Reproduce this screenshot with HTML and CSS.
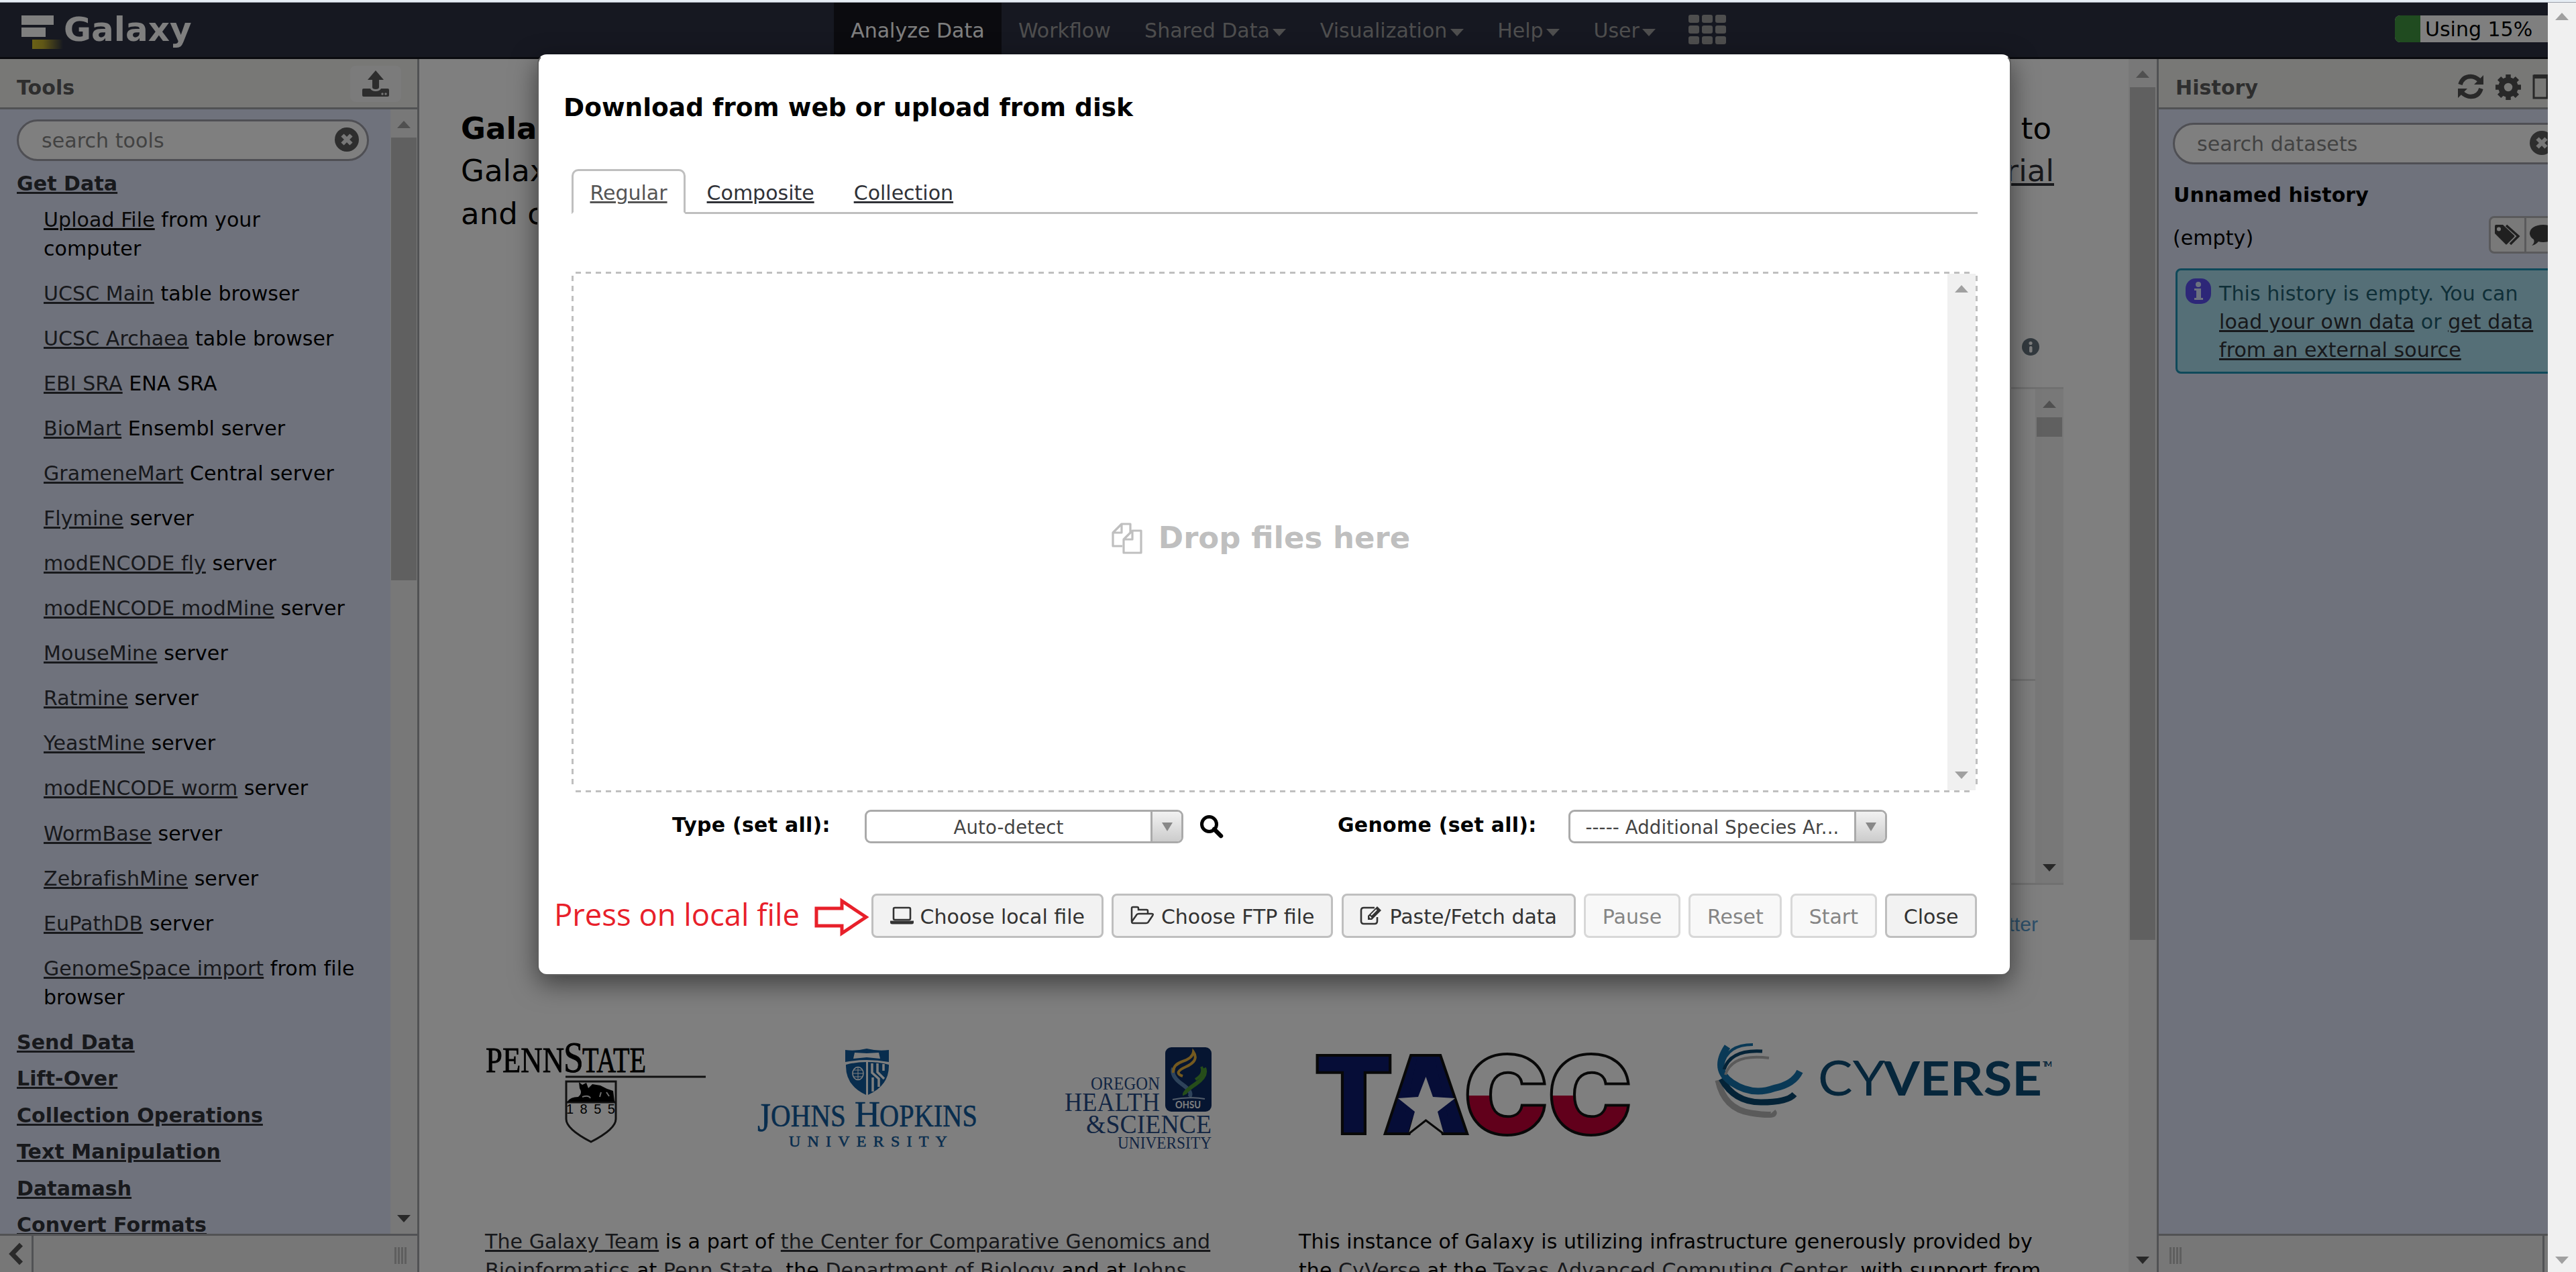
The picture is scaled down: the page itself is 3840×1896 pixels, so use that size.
FILE: index.html
```html
<!DOCTYPE html>
<html lang="en">
<head>
<meta charset="utf-8">
<title>Galaxy</title>
<link rel="stylesheet" href="styles.css">
</head>
<body>
<div class="topline"></div>
<div class="window">
<div class="app">
  <header class="masthead">
    <div class="brand">
      <svg class="brand-mark" width="66" height="54" viewBox="0 0 66 54">
        <defs><linearGradient id="gold" x1="0" x2="1"><stop offset="0" stop-color="#d6c32c"/><stop offset=".35" stop-color="#c0ae2c"/><stop offset="1" stop-color="#2c3143"/></linearGradient></defs>
        <rect x="2" y="2" width="48" height="14" fill="#fff"/><rect x="2" y="20" width="36" height="14" fill="#fff"/><rect x="18" y="38" width="46" height="14" fill="url(#gold)"/>
      </svg>
      <span class="brand-name">Galaxy</span>
    </div>
    <nav class="menu">
      <a class="active">Analyze Data</a>
      <a>Workflow</a>
      <a>Shared Data<i class="caret"></i></a>
      <a>Visualization<i class="caret"></i></a>
      <a>Help<i class="caret"></i></a>
      <a>User<i class="caret"></i></a>
      <div class="apps"><b></b><b></b><b></b><b></b><b></b><b></b><b></b><b></b><b></b></div>
    </nav>
    <div class="quota"><span class="quota-used"></span><span class="quota-text">Using 15%</span></div>
  </header>
  <div class="columns">
    <aside class="panel tools">
      <div class="panel-head"><h2>Tools</h2>
        <div class="upload"><svg width="42" height="40" viewBox="0 0 42 40"><path fill="#5a5a5a" d="M21 0 33 14H26V25Q26 28 21 28T16 25V14H9Z"/><path fill="#5a5a5a" d="M3 27H13Q15 31 21 31T29 27H39Q41 27 41 29V37Q41 39 39 39H3Q1 39 1 37V29Q1 27 3 27Z"/><circle cx="31" cy="35" r="1.7" fill="#eee"/><circle cx="36" cy="35" r="1.7" fill="#eee"/></svg></div>
      </div>
      <div class="panel-main">
        <div class="tool-list">
          <div class="search"><span>search tools</span><svg width="38" height="38" viewBox="0 0 38 38"><circle cx="19" cy="19" r="18" fill="#5c5c5c"/><path d="M12.500 12.500 25.500 25.500M25.500 12.500 12.500 25.500" stroke="#eee" stroke-width="6"/></svg></div>
          <h3><a>Get Data</a></h3>
          <p><a class="dark">Upload File</a> from your computer</p>
          <p><a>UCSC Main</a> table browser</p>
          <p><a>UCSC Archaea</a> table browser</p>
          <p><a>EBI SRA</a> ENA SRA</p>
          <p><a>BioMart</a> Ensembl server</p>
          <p><a>GrameneMart</a> Central server</p>
          <p><a>Flymine</a> server</p>
          <p><a>modENCODE fly</a> server</p>
          <p><a>modENCODE modMine</a> server</p>
          <p><a>MouseMine</a> server</p>
          <p><a>Ratmine</a> server</p>
          <p><a>YeastMine</a> server</p>
          <p><a>modENCODE worm</a> server</p>
          <p><a>WormBase</a> server</p>
          <p><a>ZebrafishMine</a> server</p>
          <p><a>EuPathDB</a> server</p>
          <p><a>GenomeSpace import</a> from file browser</p>
          <h3><a>Send Data</a></h3>
          <h3><a>Lift-Over</a></h3>
          <h3><a>Collection Operations</a></h3>
          <h3><a>Text Manipulation</a></h3>
          <h3><a>Datamash</a></h3>
          <h3><a>Convert Formats</a></h3>
        </div>
        <div class="scroll tools-scroll"><i class="up"></i><b></b><i class="down"></i></div>
      </div>
      <div class="panel-foot"><span class="collapse"><svg width="22" height="34" viewBox="0 0 22 34"><path d="M18.500 3 5 17 18.500 31" fill="none" stroke="#555" stroke-width="7"/></svg></span><span class="grip"></span></div>
    </aside>

    <main class="center">
      <div class="center-body">
        <div class="intro">
          <div><b>Galaxy</b><span>to</span></div>
          <div><span>Galaxy</span><a>tutorial</a></div>
          <div><span>and co</span></div>
        </div>
        <div class="info-row"><svg width="26" height="26" viewBox="0 0 26 26"><circle cx="13" cy="13" r="13" fill="#66757f"/><circle cx="13" cy="7.500" r="2.600" fill="#fff"/><rect x="11" y="12" width="4.500" height="9.500" rx="2" fill="#fff"/></svg></div>
        <div class="feed"><div class="feed-list"><div></div></div><div class="scroll feed-scroll"><i class="up"></i><b></b><i class="down"></i></div></div>
        <div class="feed-link">View on Twitter</div>
        <div class="logos">
          <svg class="logo-psu" width="332" height="152" viewBox="722 1555 332 152">
            <g font-family="Liberation Serif, serif" fill="#000" stroke="#000" stroke-width=".8">
              <text x="724" y="1600" font-size="52" textLength="117" lengthAdjust="spacingAndGlyphs">PENN</text>
              <text x="840" y="1600" font-size="66" textLength="30" lengthAdjust="spacingAndGlyphs">S</text>
              <text x="868" y="1600" font-size="52" textLength="95" lengthAdjust="spacingAndGlyphs">TATE</text>
              <text x="844" y="1662" font-size="20" textLength="73" stroke-width="0" font-family="Liberation Sans, sans-serif">1855</text>
            </g>
            <path d="M843 1607H1052" stroke="#222" stroke-width="3"/>
            <path d="M844 1614H918V1670Q918 1685 881 1704Q844 1685 844 1670ZM844 1645H918" fill="none" stroke="#222" stroke-width="3"/>
            <path d="M846 1644Q850 1637 862 1637Q869 1632 864 1624L863 1615 868 1619 874 1616 877 1624 883 1618 895 1620 905 1625 914 1628 916 1644Z"/>
            <path d="M868 1637Q878 1634 880 1639M896 1630 894 1637M904 1630 908 1636" stroke="#ddd" stroke-width="2" fill="none"/>
          </svg>
          <svg class="logo-jhu" width="332" height="152" viewBox="1127 1562 332 152">
            <g font-family="Liberation Serif, serif" fill="#105a9c" stroke="#105a9c" stroke-width=".6">
              <text x="1129" y="1688" font-size="62" textLength="20" lengthAdjust="spacingAndGlyphs">J</text>
              <text x="1149" y="1681" font-size="47" textLength="112" lengthAdjust="spacingAndGlyphs">OHNS</text>
              <text x="1274" y="1681" font-size="54" textLength="38" lengthAdjust="spacingAndGlyphs">H</text>
              <text x="1311" y="1681" font-size="47" textLength="146" lengthAdjust="spacingAndGlyphs">OPKINS</text>
              <text x="1176" y="1711" font-size="24" textLength="236">UNIVERSITY</text>
            </g>
            <path fill="#105a9c" d="M1260 1567Q1276 1569 1292 1565Q1308 1569 1325 1567V1585Q1292 1579 1260 1585ZM1261 1589Q1276 1585 1291 1585V1634Q1260 1620 1261 1589ZM1294 1585Q1312 1585 1325 1589Q1326 1620 1294 1634Z"/>
            <path fill="#fff" d="M1274 1571 1292 1572 1310 1571 1312 1580 1292 1578 1272 1580Z"/>
            <ellipse cx="1279" cy="1602" rx="8" ry="9.500" fill="none" stroke="#fff" stroke-width="1.500"/><path d="M1271 1602H1287M1279 1593V1611M1273 1597H1285M1273 1607H1285" stroke="#fff"/>
            <path d="M1300 1587V1601L1310 1610V1622M1308 1587V1600L1318 1610M1317 1588V1598M1301 1608V1629" stroke="#fff" stroke-width="3.500" fill="none"/>
          </svg>
          <svg class="logo-ohsu" width="222" height="156" viewBox="1585 1561 222 156">
            <g font-family="Liberation Serif, serif" fill="#254a86">
              <text x="1626" y="1626" font-size="27" textLength="103" lengthAdjust="spacingAndGlyphs">OREGON</text>
              <text x="1587" y="1658" font-size="40" textLength="142" lengthAdjust="spacingAndGlyphs">HEALTH</text>
              <text x="1619" y="1691" font-size="41" textLength="187" lengthAdjust="spacingAndGlyphs">&amp;SCIENCE</text>
              <text x="1666" y="1714" font-size="26" textLength="140" lengthAdjust="spacingAndGlyphs">UNIVERSITY</text>
            </g>
            <rect x="1737" y="1563" width="69" height="96" rx="9" fill="#0c2b62"/>
            <g fill="none" stroke-width="6"><path d="M1749 1594Q1745 1606 1762 1618T1773 1637" stroke="#5c87b5"/><path d="M1795 1594Q1800 1606 1782 1618T1766 1634" stroke="#4c9a34"/><path d="M1749 1601Q1748 1589 1763 1584T1779 1570Q1788 1583 1768 1592T1763 1606" stroke="#e8b23e" stroke-width="4"/><path d="M1782 1611Q1796 1603 1791 1592" stroke="#4c9a34" stroke-width="4"/><path d="M1748 1641Q1770 1636 1796 1640" stroke="#a9bcd6" stroke-width="2"/></g>
            <text x="1752" y="1654" font-family="Lato, sans-serif" font-size="15" fill="#fff" textLength="38" lengthAdjust="spacingAndGlyphs" font-weight="bold">OHSU</text>
          </svg>
          <svg class="logo-tacc" width="476" height="130" viewBox="1957 1568 476 130">
            <defs><linearGradient id="flag" gradientUnits="userSpaceOnUse" x1="0" y1="1574" x2="0" y2="1692"><stop offset=".51" stop-color="#fff"/><stop offset=".51" stop-color="#c20036"/></linearGradient></defs>
            <g font-family="Inter, Liberation Sans, sans-serif" font-weight="900" font-size="161" stroke="#111" stroke-width="4">
              <text x="1959" y="1691" textLength="118" lengthAdjust="spacingAndGlyphs" fill="#0c1a6e">T</text>
              <text x="2061" y="1691" textLength="130" lengthAdjust="spacingAndGlyphs" fill="#0c1a6e">A</text>
              <text x="2182" y="1691" textLength="126" lengthAdjust="spacingAndGlyphs" fill="url(#flag)">C</text>
              <text x="2307" y="1691" textLength="126" lengthAdjust="spacingAndGlyphs" fill="url(#flag)">C</text>
            </g>
            <path fill="#0c1a6e" d="M2112 1580H2139L2158 1664H2094Z"/>
            <path fill="#fff" d="M2125.500 1606 2136 1636 2169 1638 2143 1658 2152 1690 2125.500 1672 2100 1690 2109 1658 2084 1638 2114 1636Z"/>
            <path d="M2100 1691 2125.500 1671 2152 1691" fill="none" stroke="#111" stroke-width="3"/>
          </svg>
          <svg class="logo-cyverse" width="504" height="116" viewBox="2556 1554 504 116">
            <g fill="none">
              <path d="M2561 1612Q2570 1655 2610 1661T2643 1659" stroke="#b4b4b4" stroke-width="9"/>
              <path d="M2566 1610Q2585 1645 2625 1645T2675 1633" stroke="#08466e" stroke-width="9"/>
              <path d="M2575 1562Q2552 1596 2582 1616T2645 1624Q2674 1618 2683 1599" stroke="#1473ac" stroke-width="10"/>
              <path d="M2568 1590Q2574 1559 2613 1559" stroke="#1473ac" stroke-width="4"/>
              <path d="M2570 1596Q2580 1566 2627 1569" stroke="#08466e" stroke-width="5"/>
              <path d="M2572 1604Q2582 1572 2637 1579" stroke="#b4b4b4" stroke-width="4"/>
            </g>
            <g font-family="Lato, sans-serif" fill="#0c4c76" font-size="71">
              <text x="2710" y="1635" textLength="100" lengthAdjust="spacingAndGlyphs">CY</text>
              <text x="2808" y="1635" font-weight="bold" textLength="236" lengthAdjust="spacingAndGlyphs">VERSE</text>
              <text x="3045" y="1592" font-size="11" font-weight="bold" textLength="14">TM</text>
            </g>
          </svg>
        </div>
        <div class="credits">
          <p><a>The Galaxy Team</a> is a part of <a>the Center for Comparative Genomics and<br>Bioinformatics</a> at <a>Penn State</a>, the <a>Department of Biology</a> and at <a>Johns</a></p>
          <p>This instance of Galaxy is utilizing infrastructure generously provided by<br>the <a>CyVerse</a> at the <a>Texas Advanced Computing Center</a>, with support from</p>
        </div>
      </div>
      <div class="scroll center-scroll"><i class="up"></i><b></b><i class="down"></i></div>
    </main>

    <aside class="panel history">
      <div class="panel-head"><h2>History</h2>
        <div class="head-icons">
          <svg width="40" height="38" viewBox="0 0 40 38"><g fill="none" stroke="#505050" stroke-width="6.500"><path d="M4.500 16Q8 4 20 4Q27 4 33 10M35.500 22Q32 34 20 34Q13 34 7 28"/></g><path fill="#505050" d="M39 2V16H25ZM1 36V22H15Z"/></svg>
          <svg width="40" height="40" viewBox="0 0 40 40"><circle cx="20" cy="20" r="10.500" fill="none" stroke="#505050" stroke-width="8.500"/><path stroke="#505050" stroke-width="7.500" d="M20 1V8M20 32V39M1 20H8M32 20H39M6.600 6.600 11 11M29 29 33.400 33.400M33.400 6.600 29 11M11 29 6.600 33.400"/></svg>
          <svg width="44" height="38" viewBox="0 0 44 38"><path fill="none" stroke="#505050" stroke-width="3" d="M2 3H42V36H2ZM22 3V36"/><path stroke="#505050" stroke-width="6" d="M2 4H42"/></svg>
        </div>
      </div>
      <div class="panel-main">
        <div class="history-body">
          <div class="search wide"><span>search datasets</span><svg width="38" height="38" viewBox="0 0 38 38"><circle cx="19" cy="19" r="18" fill="#5c5c5c"/><path d="M12.500 12.500 25.500 25.500M25.500 12.500 12.500 25.500" stroke="#eee" stroke-width="6"/></svg></div>
          <div class="history-name">Unnamed history</div>
          <div class="history-size"><span>(empty)</span>
            <div class="tag-buttons">
              <span><svg width="40" height="32" viewBox="0 0 40 32"><path fill="#404040" fill-rule="evenodd" d="M1 3Q1 1 3 1H13L30 17Q31 18 30 19L19 30Q18 31 17 30L1 14ZM7 4.500A3 3 0 1 0 7 10.500A3 3 0 1 0 7 4.500Z"/><path d="M18 2 36 18 24 30" fill="none" stroke="#404040" stroke-width="3.500"/></svg></span>
              <span><svg width="42" height="34" viewBox="0 0 42 34"><path fill="#404040" d="M21 2C32 2 41 7 41 15S32 28 21 28Q17 28 14 27Q10 32 4 33Q9 29 7 24Q1 20 1 15C1 7 10 2 21 2Z"/></svg></span>
            </div>
          </div>
          <div class="notice">
            <svg width="38" height="38" viewBox="0 0 38 38"><rect width="38" height="38" rx="15" fill="#5a4ef0"/><circle cx="19" cy="9" r="4" fill="#d8e4ff"/><path fill="#d8e4ff" d="M13 15H23V29H26V32H13V29H16V18H13Z"/></svg>
            <p>This history is empty. You can<br><a>load your own data</a> or <a>get data</a><br><a>from an external source</a></p>
          </div>
        </div>
      </div>
      <div class="panel-foot"><span class="grip"></span><span class="collapse end"></span></div>
    </aside>
  </div>
</div>
<div class="shade"></div>
<div class="scroll page-scroll"><i class="up"></i><i class="down"></i></div>

<section class="modal">
  <h1>Download from web or upload from disk</h1>
  <div class="tabs"><a class="current">Regular</a><a>Composite</a><a>Collection</a></div>
  <div class="dropzone">
    <div class="drop-text">
      <svg width="48" height="48" viewBox="0 0 48 48"><g fill="none" stroke="#bfbfbf" stroke-width="3.200" stroke-linejoin="round"><path d="M17 35H3V15L16 2H29V14M16 2V15H3"/><path d="M19 25 32 12H45V45H19ZM32 12V25H19"/></g></svg>
      <b>Drop files here</b>
    </div>
    <div class="scroll drop-scroll"><i class="up"></i><i class="down"></i></div>
  </div>
  <div class="settings">
    <b class="type-label">Type (set all):</b>
    <div class="select"><span>Auto-detect</span><i></i></div>
    <svg class="find" width="36" height="36" viewBox="0 0 36 36"><circle cx="14.500" cy="14.500" r="11" fill="none" stroke="#000" stroke-width="5"/><path d="M22 22 32 32" stroke="#000" stroke-width="6.500" stroke-linecap="round"/></svg>
    <b class="genome-label">Genome (set all):</b>
    <div class="select"><span>----- Additional Species Ar...</span><i></i></div>
  </div>
  <div class="actions">
    <div class="hint">Press on local file</div>
    <svg class="hint-arrow" width="82" height="58" viewBox="0 0 82 58"><path d="M3 16H41V5L77 29 41 53V42H3Z" fill="none" stroke="#e8202a" stroke-width="5"/></svg>
    <button><svg width="35" height="28" viewBox="0 0 35 28"><rect x="5" y="3" width="25" height="18" rx="2" fill="none" stroke="#333" stroke-width="2.600"/><path fill="#333" d="M0 22.500H35V25Q35 27.500 32 27.500H3Q0 27.500 0 25Z"/></svg>Choose local file</button>
    <button><svg width="36" height="28" viewBox="0 0 36 28"><path d="M2 23V4Q2 2 4 2H10Q12 2 12 4V6H24Q26 6 26 8V12M2 24 9 14Q10 12 13 12H32Q35 12 33 15L27 24Q26 26 23 26H4Q2 26 2 23" fill="none" stroke="#333" stroke-width="2.500"/></svg>Choose FTP file</button>
    <button><svg width="34" height="30" viewBox="0 0 34 30"><path d="M26 18V24Q26 28 22 28H6Q2 28 2 24V8Q2 4 6 4H22" fill="none" stroke="#333" stroke-width="2.600"/><path d="M12 22V16L26 2 32 8 18 22Z" fill="#333"/><path d="M14.500 17 17 19.500M17 15 25 7" stroke="#f2f2f2" stroke-width="1.800"/></svg>Paste/Fetch data</button>
    <button class="off">Pause</button>
    <button class="off">Reset</button>
    <button class="off">Start</button>
    <button>Close</button>
  </div>
</section>
</div>
</body>
</html>
```
FILE: styles.css
```css
* { box-sizing: border-box; }
html, body { margin: 0; height: 1896px; overflow: hidden; }
body { display: flex; flex-direction: column; font: 30px/42.86px "DejaVu Sans", Verdana, sans-serif; color: #000; background: #fff; }
h1, h2, h3, p { margin: 0; font-size: inherit; }
a { color: #303238; text-decoration: underline; }
svg { display: block; flex: none; }

.topline { height: 4px; flex: none; background: #e6edf4; border-bottom: 1px solid #9a9fa8; }
.window { position: relative; flex: 1; display: flex; min-height: 0; }
.app { width: 3798px; overflow: hidden; display: flex; flex-direction: column; }
.shade { position: absolute; inset: 0 42px 0 0; background: rgba(0,0,0,.5); }

/* masthead */
.masthead { position: relative; height: 84px; flex: none; display: flex; justify-content: space-between; background: #2c3143; border-bottom: 3px solid #14161f; }
.brand { width: 1243px; display: flex; align-items: flex-start; padding: 17px 0 0 30px; }
.brand-name { font-weight: bold; font-size: 50px; line-height: 58px; color: #fff; margin: -6px 0 0 -1px; }
.menu { display: flex; flex: 1; }
.menu a { display: flex; align-items: center; padding: 3px 25.2px 0; color: #9c9c9c; text-decoration: none; }
.menu a.active { background: #16171f; color: #fff; }
.caret { border: 10.5px solid transparent; border-top: 11px solid #9c9c9c; border-bottom: 0; margin: 5px 0 0 4.500px; }
.apps { display: grid; grid-template-columns: repeat(3, 16px); grid-auto-rows: 12px; gap: 4px; margin: 18px 0 0 23px; }
.apps b { background: #9c9c9c; border-radius: 3px; }
.quota { width: 228px; height: 40px; margin-top: 19px; display: flex; background: #fff; border-radius: 8px 0 0 8px; overflow: hidden; }
.quota-used { width: 38px; background: #419641; }
.quota-text { padding-left: 7px; }

/* side panels */
.columns { flex: 1; min-height: 0; display: grid; grid-template-columns: 625px 2590px 583px; letter-spacing: .08px; }
.panel { display: flex; flex-direction: column; min-height: 0; overflow: hidden; background: #dfe5f9; }
.tools { border-right: 3px solid #a3a5a9; }
.history { border-left: 3px solid #a3a5a9; }
.panel-head { height: 75px; flex: none; display: flex; justify-content: space-between; background: #f0f0ed; border-bottom: 3px solid #a3a5a9; padding: 22px 24px 0 25px; }
.panel-head h2 { color: #5c5c5c; }
.history .panel-head { justify-content: flex-start; }
.history h2 { width: 420px; flex: none; }
.head-icons { display: flex; gap: 16px; }
.upload { width: 76px; height: 54px; margin-top: -12px; border-radius: 8px; background: #f6f6f6; display: flex; justify-content: center; align-items: center; }
.panel-main { flex: 1; min-height: 0; display: flex; overflow: hidden; }
.tool-list { width: 582px; padding: 15px 0 0 25px; }
.search { display: flex; align-items: center; justify-content: space-between; width: 525px; height: 62px; padding: 2px 11px 0 34px; background: #fff; border: 3px solid #9e9fa8; border-radius: 31px; color: #858585; }
.search svg { margin-top: -4px; }
.tool-list h3 { margin: 11.7px 0; }
.tool-list h3:first-of-type { margin-top: 12.5px; }
.tool-list h3 + h3 { margin-top: 0; }
.tool-list p { width: 468px; margin: 0 0 24.2px 40px; }
.tool-list p + h3 { margin-top: 24.1px; }
.dark { color: #101010; }
.panel-foot { height: 57px; flex: none; display: flex; justify-content: space-between; align-items: center; background: #efefef; border-top: 3px solid #a3a5a9; padding-right: 16px; }
.collapse { align-self: stretch; width: 50px; border-right: 3px solid #a3a5a9; display: flex; justify-content: center; align-items: center; }
.collapse.end { width: 8px; border-right: 0; border-left: 3px solid #a3a5a9; }
.history .panel-foot { padding: 0 0 0 16px; }
.grip { width: 18px; height: 25px; margin-top: 4px; background: repeating-linear-gradient(90deg, #bcbcbc 0 3px, #efefef 3px 5px); }

/* scrollbars */
.scroll { flex: none; display: flex; flex-direction: column; align-items: center; width: 42px; background: #f0f0f0; padding: 17px 0 12px; }
.scroll i { border: 10.5px solid transparent; }
.scroll .up { border-top: 0; border-bottom: 11px solid #a0a0a0; }
.scroll .down { border-bottom: 0; border-top: 11px solid #505050; margin-top: auto; }
.scroll b { width: 38px; margin-top: 14px; background: #c1c1c1; }
.tools-scroll b { height: 660px; }
.tools-scroll { padding-bottom: 17px; width: 40px; }
.center-scroll b { height: 1271px; }
.page-scroll { position: absolute; right: 0; top: 0; bottom: 0; }
.page-scroll .down, .drop-scroll .down { border-top-color: #a0a0a0; }
.page-scroll { padding-top: 15px; }

/* centre */
.center { display: flex; min-width: 0; background: #fff; }
.center-body { width: 2548px; height: 1808px; overflow: hidden; padding: 72px 97px 0 62px; }
.intro { height: 191px; font-size: 45px; line-height: 63.3px; padding-right: 14px; }
.intro div { display: flex; justify-content: space-between; }
.intro div span:nth-child(2) { padding-right: 4px; }
.info-row { display: flex; justify-content: flex-end; padding: 153px 36px 0 0; }
.feed { height: 742px; margin: 47px 0 0 2089px; display: flex; width: 300px; border: solid #e1e1e1; border-width: 3px 0; }
.feed-list { flex: 1; padding-top: 432px; }
.feed-list div { border-top: 3px solid #e1e1e1; }
.feed-scroll { padding: 17px 0; }
.feed-scroll b { height: 29px; }
.feed-link { font: 30px/42px "Liberation Sans", Arial, sans-serif; color: #5aa0d4; text-align: right; padding: 38px 38px 0 0; }
.logos { height: 431px; padding: 154px 0 0 35px; display: flex; align-items: flex-start; }
.logo-jhu { margin: 7px 0 0 73px; }
.logo-ohsu { margin: 6px 0 0 126px; }
.logo-tacc { margin: 14px 0 0 150px; }
.logo-cyverse { margin: -1px 0 0 123px; }
.credits { display: grid; grid-template-columns: 1213px 1180px; padding-left: 36px; white-space: nowrap; }

/* history */
.history-body { width: 610px; padding: 20px 0 0 21px; }
.search.wide { width: 590px; padding: 2px 18px 0 33px; }
.history-name { font-weight: bold; padding: 25px 0 0 1px; }
.history-size { display: flex; justify-content: space-between; width: 583px; height: 56px; margin-top: 9px; }
.history-size > span { padding-top: 12px; }
.tag-buttons { display: flex; width: 112px; height: 56px; background: #f2f2f2; border: 3px solid #b5b5b9; border-radius: 8px; }
.tag-buttons span { display: flex; align-items: center; justify-content: center; width: 53px; flex: none; border-right: 3px solid #b5b5b9; }
.notice { display: flex; gap: 12px; width: 620px; height: 157px; margin: 22px 0 0 4px; padding: 12px; background: #aadfee; border: 3px solid #1f93b5; border-radius: 8px; color: #1f5f70; }
.notice p { padding-top: 2px; line-height: 42px; white-space: nowrap; }

/* upload dialog */
.modal { position: absolute; left: 801px; top: 77px; width: 2197px; height: 1373px; background: #fff; border: 2px solid #5f5f5f; border-top-color: #fff; border-radius: 14px; box-shadow: 0 12px 38px rgba(0,0,0,.5); padding: 0 48px 0 49px; }
.modal h1 { font-size: 37.5px; line-height: 54px; margin: 50px -12px 0; }
.tabs { display: flex; height: 67px; margin-top: 65px; border-bottom: 3px solid #bfbfbf; }
.tabs a { height: 67px; padding: 12px 24.500px 0; margin-right: 4px; border: 3px solid transparent; }
.tabs .current { color: #555; background: #fff; border-color: #bfbfbf #bfbfbf #fff; border-radius: 10px 10px 0 0; }
.dropzone { height: 776px; margin-top: 86px; padding: 3px; display: flex;
  background:
    repeating-linear-gradient(90deg, #bfbfbf 0 8px, transparent 8px 15px) 6px 0 / calc(100% - 12px) 3px no-repeat,
    repeating-linear-gradient(90deg, #bfbfbf 0 8px, transparent 8px 15px) 6px 100% / calc(100% - 12px) 3px no-repeat,
    repeating-linear-gradient(#bfbfbf 0 8px, transparent 8px 15px) 0 6px / 3px calc(100% - 12px) no-repeat,
    repeating-linear-gradient(#bfbfbf 0 8px, transparent 8px 15px) 100% 6px / 3px calc(100% - 12px) no-repeat; }
.drop-text { flex: 1; display: flex; justify-content: center; align-items: center; gap: 23px; padding-top: 19px; color: #bfbfbf; font-size: 45px; }
.drop-scroll { padding-bottom: 17px; }
.settings { display: flex; margin-top: 26px; height: 50px; }
.settings b { padding-top: 2px; letter-spacing: .25px; }
.type-label { margin-left: 150px; width: 287px; }
.select { display: flex; width: 475px; height: 50px; border: 3px solid #aaa; border-radius: 9px; overflow: hidden; font-size: 27.5px; line-height: 47px; letter-spacing: .15px; color: #444; text-align: center; }
.select span { flex: 1; white-space: nowrap; }
.select i { width: 46px; border-left: 3px solid #aaa; background: linear-gradient(#f2f2f2, #ccc); display: flex; align-items: center; justify-content: center; }
.select i::before { content: ""; border: 8px solid transparent; border-top: 13px solid #888; border-bottom: 0; }
.find { margin: 7px 170px 0 24px; }
.genome-label { width: 344px; }
.actions { display: flex; margin: 75px 0 0 -26px; height: 66px; }
.hint { width: 386px; font: 45.400px/66px "Open Sans", sans-serif; color: #e8202a; white-space: nowrap; margin-top: -3px; }
.hint-arrow { margin: 6px 3px 0 2px; }
button { display: flex; align-items: center; gap: 10px; height: 66px; margin: 0 12.700px 0 0; padding: 4px 24.600px 0; background: #f2f2f2; border: 3px solid #bfbfbf; border-radius: 8px; font: inherit; color: #333; white-space: nowrap; }
button:last-child { margin-right: 0; }
button svg { margin-top: -6px; }
.off { color: #858585; background: #f8f8f8; border-color: #d8d8d8; }
```
